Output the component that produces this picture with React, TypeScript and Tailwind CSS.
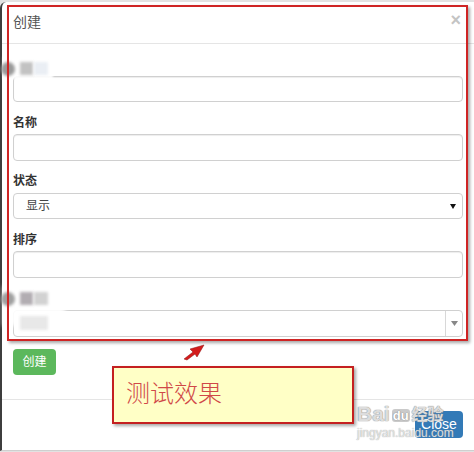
import React from "react";

const cjk = { fontFamily: '"Liberation Sans", "Noto Sans CJK SC", sans-serif' };

function Label({ children, mt }: { children: React.ReactNode; mt: string }) {
  return (
    <div className={`${mt} h-[16px] text-[12px] leading-[16px] font-bold text-[#333]`}>{children}</div>
  );
}

function TextInput({ mt, h }: { mt: string; h: string }) {
  return (
    <div
      className={`${mt} ${h} w-full rounded-[4px] border border-[#d0d0d0] bg-white shadow-[inset_0_1px_1px_rgba(0,0,0,0.075)]`}
    />
  );
}

function Blur({ className }: { className: string }) {
  return <div className={`absolute blur-[1.5px] ${className}`} />;
}

export default function App() {
  return (
    <div className="relative w-[474px] h-[452px] overflow-hidden bg-[#e2e2e2]" style={cjk}>
      <div className="absolute left-0 top-[2px] w-[476px] h-[449px] bg-white border-l-2 border-l-[#3d3d3d] border-b border-b-[#cfcfcf] rounded-tl-[6px] flex flex-col">
        {/* header */}
        <div className="h-[42px] border-b border-[#e5e5e5] flex items-center justify-between pl-[11px] pr-[15px]">
          <span className="text-[14px] text-[#555] mt-[-1px]">创建</span>
          <span className="text-[18px] font-bold text-[#c4c4c4] leading-none mt-[-6px]">×</span>
        </div>
        {/* body */}
        <div className="pl-[11px] pr-[13px] pb-[24px] flex flex-col">
          <div className="relative">
            <div className="mt-[14px] h-[16px]" />
            <TextInput mt="mt-[2px]" h="h-[26px]" />
            <div className="absolute left-[-10px] top-[13px] w-[50px] h-[22px] bg-white/90 blur-[1px]" />
            <Blur className="left-[-12px] top-[18px] w-[14px] h-[14px] rounded-full bg-[#9a9a9a]" />
            <Blur className="left-[7px] top-[18px] w-[13px] h-[13px] bg-[#c2c2c2]" />
            <Blur className="left-[21px] top-[18px] w-[14px] h-[13px] bg-[#eaeef4]" />
          </div>
          <Label mt="mt-[13px]">名称</Label>
          <TextInput mt="mt-[3px]" h="h-[27px]" />
          <Label mt="mt-[12px]">状态</Label>
          <div className="mt-[4px] h-[26px] w-full rounded-[4px] border border-[#d0d0d0] bg-white flex items-center justify-between pl-[12px] pr-[6px]">
            <span className="text-[12px] text-[#444]">显示</span>
            <svg width="6" height="5" viewBox="0 0 6 5"><polygon points="0,0 6,0 3,5" fill="#111" /></svg>
          </div>
          <Label mt="mt-[13px]">排序</Label>
          <TextInput mt="mt-[3px]" h="h-[27px]" />
          <div className="relative">
            <div className="mt-[11px] h-[16px]" />
            <div className="mt-[5px] h-[27px] w-full rounded-[4px] border border-[#d0d0d0] bg-white flex justify-end">
              <div className="w-[17px] border-l border-[#d8d8d8] flex items-center justify-center">
                <svg width="7" height="5" viewBox="0 0 7 5"><polygon points="0,0 7,0 3.5,5" fill="#888" /></svg>
              </div>
            </div>
            <div className="absolute left-[-10px] top-[8px] w-[62px] h-[40px] bg-white/90 blur-[2px]" />
            <Blur className="left-[-12px] top-[14px] w-[14px] h-[14px] rounded-full bg-[#a0a0a0]" />
            <Blur className="left-[7px] top-[14px] w-[13px] h-[13px] bg-[#b2adb2]" />
            <Blur className="left-[21px] top-[14px] w-[14px] h-[13px] bg-[#d2d2d2]" />
            <Blur className="left-[7px] top-[38px] w-[28px] h-[14px] bg-[#e8e8e8]" />
          </div>
          <div className="mt-[12px]">
            <button className="h-[26px] w-[43px] rounded-[4px] bg-[#5cb85c] text-white text-[12px] flex items-center justify-center">
              创建
            </button>
          </div>
        </div>
        {/* footer */}
        <div className="flex-1 border-t border-[#e5e5e5] flex justify-end items-start pt-[11px] pr-[13px]">
          <button className="h-[27px] w-[48px] rounded-[4px] bg-[#337ab7] text-white text-[14px] flex items-center justify-center">
            Close
          </button>
        </div>
      </div>

      {/* baidu watermark */}
      <div className="absolute left-[357px] top-[403px] pointer-events-none leading-none">
        <div className="flex items-end gap-[2px] text-[21px] font-bold text-[#f4f4f4]/80 [text-shadow:0_0_1px_#8a8a8a,0_0_1px_#8a8a8a]" style={{ fontFamily: '"Liberation Sans", sans-serif' }}>
          <span>Bai</span>
          <span className="text-[13px] bg-[#bdbdbd]/80 rounded-[3px] px-[1px] mb-[2px] text-white">du</span>
          <span className="text-[16px] mb-[3px]" style={{ fontFamily: '"Noto Sans CJK SC", sans-serif' }}>经验</span>
        </div>
        <div className="mt-[3px] text-[12px] text-[#f4f4f4]/80 [text-shadow:0_0_1px_#8a8a8a]" style={{ fontFamily: '"Liberation Sans", sans-serif' }}>
          jingyan.baidu.com
        </div>
      </div>

      {/* red annotation frame */}
      <div className="absolute left-[7px] top-[5px] w-[461px] h-[336px] border-2 border-[#cf2424] shadow-[2px_2px_3px_rgba(0,0,0,0.35)] pointer-events-none" />

      {/* arrow */}
      <svg className="absolute left-[180px] top-[342px]" width="30" height="22" viewBox="0 0 30 22">
        <polygon points="24,3 10,7 13,10 4,17 7,18 15,12 17,15" fill="#d41c1c" stroke="#8a1010" strokeWidth="0.5" />
      </svg>

      {/* callout */}
      <div className="absolute left-[112px] top-[366px] w-[242px] h-[58px] border-2 border-[#c42020] bg-[#ffffc6] shadow-[2px_2px_3px_rgba(0,0,0,0.35)] flex items-center pl-[12px]">
        <span className="text-[24px] font-light text-[#d04848] leading-none mt-[-6px]" style={{ fontFamily: '"Noto Sans CJK SC", sans-serif' }}>
          测试效果
        </span>
      </div>
    </div>
  );
}
